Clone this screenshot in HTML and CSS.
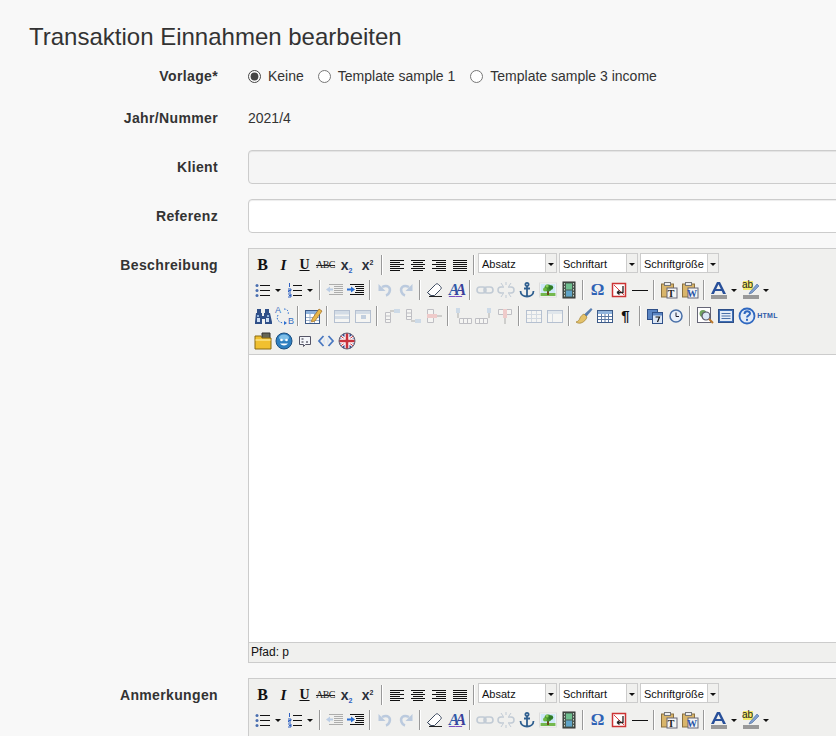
FILE: index.html
```html
<!DOCTYPE html>
<html lang="de">
<head>
    <meta charset="UTF-8">
    <meta name="viewport" content="width=device-width, initial-scale=1.0">
    <title>Transaktion Einnahmen bearbeiten</title>
    <link rel="stylesheet" href="styles.css">
</head>
<body>
    <!-- toolbar icons -->
    <svg class="defs" xmlns="http://www.w3.org/2000/svg">
        <symbol id="i-left" viewBox="0 0 20 20"><path d="M3 5.500h14M3 7.500h10M3 9.500h14M3 11.500h10M3 13.500h14M3 15.500h10" stroke="#111" fill="none"/></symbol>
        <symbol id="i-center" viewBox="0 0 20 20"><path d="M3 5.500h14M5 7.500h10M3 9.500h14M5 11.500h10M3 13.500h14M5 15.500h10" stroke="#111" fill="none"/></symbol>
        <symbol id="i-right" viewBox="0 0 20 20"><path d="M3 5.500h14M7 7.500h10M3 9.500h14M7 11.500h10M3 13.500h14M7 15.500h10" stroke="#111" fill="none"/></symbol>
        <symbol id="i-justify" viewBox="0 0 20 20"><path d="M3 5.500h14M3 7.500h14M3 9.500h14M3 11.500h14M3 13.500h14M3 15.500h14" stroke="#111" fill="none"/></symbol>
        <symbol id="i-bullist" viewBox="0 0 20 20"><path d="M7 5.500h10M7 10.500h10M7 15.500h10" stroke="#111" fill="none"/><circle cx="4" cy="5.500" r="1.500" fill="#4a6fb0"/><circle cx="4" cy="10.500" r="1.500" fill="#4a6fb0"/><circle cx="4" cy="15.500" r="1.500" fill="#4a6fb0"/></symbol>
        <symbol id="i-numlist" viewBox="0 0 20 20"><path d="M8 5.500h9M8 10.500h9M8 15.500h9" stroke="#111" fill="none"/><path d="M4.500 3v4M3 9h3v1.500H3.500V12H6M3 14h3v3H3M4 15.500h2" stroke="#2d5fc0" fill="none"/></symbol>
        <symbol id="i-outdent" viewBox="0 0 20 20"><path d="M4 4.500h14M9 6.500h9M9 8.500h9M9 10.500h9M9 12.500h9M4 14.500h14" stroke="#333" fill="none"/><path d="M1 9.500l4-3v2h3v2H5v2z" fill="#5b8fd6"/></symbol>
        <symbol id="i-indent" viewBox="0 0 20 20"><path d="M4 4.500h14M9 6.500h9M10 8.500h8M10 10.500h8M9 12.500h9M4 14.500h14" stroke="#111" fill="none"/><path d="M9 9.500l-4-3v2H1v2h4v2z" fill="#2d6fd0"/></symbol>
        <symbol id="i-undo" viewBox="0 0 20 20"><path d="M7 7c6-3 9 1 7.500 5-.7 2-2 3-3.500 3.500" stroke="#5a86c2" stroke-width="2.500" fill="none"/><path d="M3.500 4v7h7z" fill="#5a86c2"/></symbol>
        <symbol id="i-redo" viewBox="0 0 20 20"><path d="M13 7C7 4 4 8 5.500 12c.7 2 2 3 3.500 3.500" stroke="#5a86c2" stroke-width="2.500" fill="none"/><path d="M16.500 4v7h-7z" fill="#5a86c2"/></symbol>
        <symbol id="i-eraser" viewBox="0 0 20 20"><path d="M2.500 12.500l8-8c1-1 2-1 3 0l2 2c1 1 1 2 0 3l-6 6H6z" fill="#fff" stroke="#3c4a60"/><path d="M2.500 12.500l3 3" stroke="#3c4a60"/><path d="M4 16.500h13" stroke="#222"/></symbol>
        <symbol id="i-link" viewBox="0 0 20 20"><g fill="none" stroke="#6d87a8" stroke-width="1.600"><rect x="2" y="7" width="9" height="6" rx="3"/><rect x="9" y="7" width="9" height="6" rx="3"/></g></symbol>
        <symbol id="i-unlink" viewBox="0 0 20 20"><g fill="none" stroke="#6d87a8" stroke-width="1.500"><path d="M8 7H5a3 3 0 000 6h3M12 7h3a3 3 0 010 6h-3"/><path d="M10 2v3M10 15v3M5 3l2 3M15 3l-2 3M5 17l2-3M15 17l-2-3" stroke-width="1"/></g></symbol>
        <symbol id="i-anchor" viewBox="0 0 20 20"><g fill="none" stroke="#2f5f8f" stroke-width="1.800"><circle cx="10" cy="4.500" r="1.600"/><path d="M10 6v11M7 8.500h6M3.500 11c0 3.500 3 5.500 6.500 5.500s6.500-2 6.500-5.500"/></g></symbol>
        <symbol id="i-image" viewBox="0 0 20 20"><rect x="1.500" y="3" width="17" height="14" fill="#fff" stroke="#ddd"/><rect x="2.500" y="4" width="15" height="9" fill="#cfe8f8"/><rect x="2.500" y="13" width="15" height="3" fill="#74b84e"/><rect x="9" y="10" width="2" height="5" fill="#6b4a1e"/><circle cx="10" cy="8" r="3.500" fill="#3f8f2f"/><circle cx="7" cy="9.500" r="2" fill="#6cb83f"/><circle cx="13" cy="7.500" r="2.200" fill="#2d7a25"/><circle cx="9" cy="6" r="1.500" fill="#8ccc5a"/></symbol>
        <symbol id="i-media" viewBox="0 0 20 20"><rect x="4" y="2" width="12" height="16" fill="#4a5a50" stroke="#333"/><rect x="7" y="3.500" width="6" height="6" fill="#6fbf8f"/><rect x="7" y="10.500" width="6" height="6" fill="#5fa3c7"/><path d="M5.500 3v14M14.500 3v14" stroke="#c8d0c8" stroke-dasharray="1.500 1.500"/></symbol>
        <symbol id="i-nbsp" viewBox="0 0 20 20"><rect x="3.500" y="3.500" width="13" height="13" fill="#fff" stroke="#c33" stroke-width="1.500"/><path d="M5 5l10 10" stroke="#d44"/><path d="M14 6v6.500H8M8 12.500l2.500-2M8 12.500l2.500 2" stroke="#222" stroke-width="1.300" fill="none"/></symbol>
        <symbol id="i-hr" viewBox="0 0 20 20"><path d="M2 10.500h16" stroke="#111"/></symbol>
        <symbol id="i-clip" viewBox="0 0 20 20"><rect x="2.500" y="4" width="12" height="13" fill="#d9b56a" stroke="#8a7040"/><rect x="5.500" y="2.500" width="6" height="3" fill="#eee" stroke="#777"/><rect x="8" y="8" width="10" height="10" fill="#f4f4f4" stroke="#667"/></symbol>
        <symbol id="i-forecolor" viewBox="0 0 20 20"><path d="M2 14L8 2h3l6 12h-3l-1.200-3H6.200L5 14zM7.200 9h4.600L9.500 4.200z" fill="#28509a"/><rect x="2" y="15" width="16" height="4" fill="#999"/></symbol>
        <symbol id="i-backcolor" viewBox="0 0 20 20"><rect x="2" y="1" width="10" height="9" fill="#f4e96a"/><path d="M9 12l7-8 2 2-7 7-3 1z" fill="#7f9fcf" stroke="#4a6a9a" stroke-width=".6"/><rect x="2" y="15" width="16" height="4" fill="#999"/></symbol>
        <symbol id="i-search" viewBox="0 0 20 20"><g fill="#2f4f88"><path d="M4 3h4v4H4zM12 3h4v4h-4z"/><path d="M3 7h6v3h2V7h6l2 9v2h-7v-5H9v5H2v-2z"/></g><path d="M4 9h2v2H4zM14 9h2v2h-2z" fill="#8fb3dc"/><path d="M4 12h3v4H4zM13 12h3v4h-3z" fill="#cfe0f5"/></symbol>
        <symbol id="i-replace" viewBox="0 0 20 20"><path d="M4 9c-2 4 0 7 5 8M10 3c4 0 5 3 4 6" stroke="#2d6fd0" stroke-dasharray="1.500 1.500" fill="none"/><path d="M10 15l3 2-3 2z" fill="#2d6fd0"/></symbol>
        <symbol id="i-tableedit" viewBox="0 0 20 20"><rect x="2.500" y="4.500" width="14" height="13" fill="#fff" stroke="#3c5a88"/><rect x="3" y="5" width="13" height="3" fill="#8fb3dc"/><path d="M3 11.500h13M3 14.500h13M7 8v9M11.500 8v9" stroke="#9fb3cc"/><path d="M9 13l7-10 3 2-7 10-3.500 1z" fill="#e8b84a" stroke="#a06a20" stroke-width=".7"/></symbol>
        <symbol id="i-rowprop" viewBox="0 0 20 20"><rect x="2.500" y="4.500" width="15" height="12" fill="#fff" stroke="#4a6a9a"/><rect x="3" y="5" width="14" height="3.500" fill="#9fb8d8"/><rect x="3" y="10" width="14" height="3" fill="#9fb8d8"/></symbol>
        <symbol id="i-cellprop" viewBox="0 0 20 20"><rect x="2.500" y="4.500" width="15" height="12" fill="#fff" stroke="#4a6a9a"/><rect x="3" y="5" width="14" height="3" fill="#9fb8d8"/><rect x="8" y="9" width="5" height="4" fill="#6f94c4"/></symbol>
        <symbol id="i-rowbefore" viewBox="0 0 20 20"><path d="M3.500 6.500h5v10h-5zM3.500 10h5M3.500 13.500h5" fill="#fff" stroke="#667"/><rect x="12" y="3" width="6" height="4" fill="#8fb3dc"/><path d="M8 5h4" stroke="#333"/></symbol>
        <symbol id="i-rowafter" viewBox="0 0 20 20"><path d="M3.500 3.500h5v10h-5zM3.500 7h5M3.500 10.500h5" fill="#fff" stroke="#667"/><rect x="12" y="13" width="6" height="4" fill="#8fb3dc"/><path d="M8 15h4" stroke="#333"/></symbol>
        <symbol id="i-rowdel" viewBox="0 0 20 20"><path d="M3.500 3.500h6v13h-6z" fill="#fff" stroke="#667"/><rect x="3" y="8" width="10" height="4" fill="#e88"/><path d="M13 10h5" stroke="#333"/></symbol>
        <symbol id="i-colbefore" viewBox="0 0 20 20"><rect x="3" y="2" width="4" height="5" fill="#8fb3dc"/><path d="M5 7v5" stroke="#333"/><path d="M6.500 12.500h12v5h-12zM10.500 12.500v5M14.500 12.500v5" fill="#fff" stroke="#667"/></symbol>
        <symbol id="i-colafter" viewBox="0 0 20 20"><rect x="13" y="2" width="4" height="5" fill="#8fb3dc"/><path d="M15 7v5" stroke="#333"/><path d="M1.500 12.500h12v5h-12zM5.500 12.500v5M9.500 12.500v5" fill="#fff" stroke="#667"/></symbol>
        <symbol id="i-coldel" viewBox="0 0 20 20"><path d="M3.500 3.500h13v5h-13z" fill="#fff" stroke="#667"/><rect x="8" y="3" width="4" height="9" fill="#e88"/><path d="M10 12v6" stroke="#333"/></symbol>
        <symbol id="i-split" viewBox="0 0 20 20"><rect x="2.500" y="4.500" width="15" height="12" fill="#fff" stroke="#4a6a9a"/><path d="M3 8.500h14M3 12.500h14M7.500 5v11M12.500 5v11" stroke="#9fb3cc"/></symbol>
        <symbol id="i-merge" viewBox="0 0 20 20"><rect x="2.500" y="4.500" width="15" height="12" fill="#fff" stroke="#4a6a9a"/><rect x="3" y="5" width="14" height="3" fill="#c4d4e8"/><path d="M7.500 8v8" stroke="#9fb3cc"/></symbol>
        <symbol id="i-brush" viewBox="0 0 20 20"><path d="M17 2l1.500 1.500-6 7-2.500-2z" fill="#5a7fb0"/><path d="M10 8l3 3c-1 3-3 5-6 6-2 .5-4 0-5-1 3-1 3-2 4-4s2-3 4-4z" fill="#e4c26a" stroke="#a08030" stroke-width=".7"/></symbol>
        <symbol id="i-table" viewBox="0 0 20 20"><rect x="2.500" y="4.500" width="15" height="12" fill="#fff" stroke="#3c5a88"/><rect x="3" y="5" width="14" height="3" fill="#8fb3dc"/><path d="M3 10.500h14M3 13.500h14M6.500 8v8M10 8v8M13.500 8v8" stroke="#5c7aa5"/></symbol>
        <symbol id="i-date" viewBox="0 0 20 20"><rect x="2.500" y="3.500" width="10" height="10" fill="#5b86c4" stroke="#2f5088"/><rect x="7.500" y="6.500" width="10" height="11" fill="#dbe6f5" stroke="#2f5088"/><rect x="8" y="7" width="9" height="2.500" fill="#5b86c4"/><path d="M10.500 11h4l-2 5" stroke="#111" stroke-width="1.200" fill="none"/></symbol>
        <symbol id="i-time" viewBox="0 0 20 20"><circle cx="10" cy="10" r="6" fill="#e9f0fa" stroke="#4a70a8" stroke-width="1.500"/><path d="M10 6.500V10.500h3" stroke="#223" fill="none"/></symbol>
        <symbol id="i-preview" viewBox="0 0 20 20"><rect x="2.500" y="1.500" width="13" height="15" fill="#fff" stroke="#667"/><circle cx="8" cy="7.500" r="3.500" fill="#6fa35f"/><circle cx="11" cy="10" r="4" fill="#dbe8f5" stroke="#556" stroke-width="1.200"/><path d="M14 13l4 4" stroke="#b9772a" stroke-width="2"/></symbol>
        <symbol id="i-full" viewBox="0 0 20 20"><rect x="2.500" y="3.500" width="15" height="13" fill="#3f6fb5" stroke="#2f5088"/><rect x="4" y="5" width="12" height="10" fill="#e4ecf7"/><path d="M5.500 7.500h9M5.500 10h9M5.500 12.500h9" stroke="#4a70a8"/></symbol>
        <symbol id="i-help" viewBox="0 0 20 20"><circle cx="10" cy="10" r="7.500" fill="#e4ecf7" stroke="#2f68c0" stroke-width="1.800"/><path d="M7.500 8c0-3.500 5.500-3.500 5.500-.5 0 2-3 2-3 4" stroke="#2f68c0" stroke-width="2" fill="none"/><rect x="9" y="12.800" width="2" height="2" fill="#2f68c0"/></symbol>
        <symbol id="i-folder" viewBox="0 0 20 20"><path d="M9 2h8v8H9z" fill="#665" stroke="#333"/><path d="M2 5h6l1 2h9v11H2z" fill="#f0c030" stroke="#8a6a10"/><path d="M2.500 9h15" stroke="#fbe58a" stroke-width="1.500"/></symbol>
        <symbol id="i-smiley" viewBox="0 0 20 20"><circle cx="10" cy="10" r="8" fill="#2f7fc0" stroke="#1c4f80"/><ellipse cx="10" cy="6.500" rx="5" ry="3" fill="#7fbfe8"/><circle cx="7.500" cy="9" r="1.300" fill="#fff"/><circle cx="12.500" cy="9" r="1.300" fill="#fff"/><path d="M6 12.500c2 2.500 6 2.500 8 0z" fill="#fff"/></symbol>
        <symbol id="i-bubble" viewBox="0 0 20 20"><path d="M4.500 5.500h11v8h-5l-2 2v-2h-4z" fill="#f4f6fa" stroke="#556"/><path d="M6.500 8h2M6.500 11h2M11 11h2" stroke="#223"/></symbol>
        <symbol id="i-code" viewBox="0 0 20 20"><path d="M7.500 5L3 10l4.500 5M12.500 5L17 10l-4.500 5" stroke="#4a78c0" stroke-width="1.800" fill="none"/><path d="M9 6.500l-2.500 3.500L9 13.500zM11 6.500l2.500 3.500-2.500 3.500z" fill="#dbe6f5"/></symbol>
        <symbol id="i-flag" viewBox="0 0 20 20"><clipPath id="flag-clip"><circle cx="10" cy="10" r="8"/></clipPath><g clip-path="url(#flag-clip)"><rect width="20" height="20" fill="#33478f"/><path d="M0 2l20 16M20 2L0 18" stroke="#fff" stroke-width="3"/><path d="M0 2l20 16M20 2L0 18" stroke="#c8323c"/><path d="M10 0v20M0 10h20" stroke="#fff" stroke-width="5"/><path d="M10 0v20M0 10h20" stroke="#c8323c" stroke-width="2.600"/></g><circle cx="10" cy="10" r="8" fill="none" stroke="#667"/></symbol>
    </svg>

    <h1 class="page-title">Transaktion Einnahmen bearbeiten</h1>

    <form class="form">
        <div class="form-group form-group-vorlage">
            <label class="form-label">Vorlage*</label>
            <div class="radios">
                <label class="radio-item"><input type="radio" name="vorlage" checked> Keine</label>
                <label class="radio-item"><input type="radio" name="vorlage"> Template sample 1</label>
                <label class="radio-item"><input type="radio" name="vorlage"> Template sample 3 income</label>
            </div>
        </div>

        <div class="form-group form-group-jahr">
            <label class="form-label">Jahr/Nummer</label>
            <div class="static-value">2021/4</div>
        </div>

        <div class="form-group">
            <label class="form-label">Klient</label>
            <input type="text" class="form-control" disabled>
        </div>

        <div class="form-group">
            <label class="form-label">Referenz</label>
            <input type="text" class="form-control">
        </div>

        <div class="form-group">
            <label class="form-label">Beschreibung</label>
            <div class="editor">
                <div class="toolbar">
                    <div class="tool-row">
                        <span class="btn t-bold">B</span>
                        <span class="btn t-italic">I</span>
                        <span class="btn t-under">U</span>
                        <span class="btn t-strike">ABC</span>
                        <span class="btn t-x"><span>x<sub>2</sub></span></span>
                        <span class="btn t-x"><span>x<sup>2</sup></span></span>
                        <span class="sep"></span>
                        <span class="btn"><svg class="ico"><use href="#i-left"/></svg></span>
                        <span class="btn"><svg class="ico"><use href="#i-center"/></svg></span>
                        <span class="btn"><svg class="ico"><use href="#i-right"/></svg></span>
                        <span class="btn"><svg class="ico"><use href="#i-justify"/></svg></span>
                        <span class="sep"></span>
                        <span class="mce-select"><span class="mce-select-text">Absatz</span><span class="mce-select-arrow"></span></span>
                        <span class="mce-select"><span class="mce-select-text">Schriftart</span><span class="mce-select-arrow"></span></span>
                        <span class="mce-select"><span class="mce-select-text">Schriftgröße</span><span class="mce-select-arrow"></span></span>
                    </div>
                    <div class="tool-row">
                        <span class="btn"><svg class="ico"><use href="#i-bullist"/></svg></span><span class="drop"></span>
                        <span class="btn"><svg class="ico"><use href="#i-numlist"/></svg></span><span class="drop"></span>
                        <span class="sep"></span>
                        <span class="btn off"><svg class="ico"><use href="#i-outdent"/></svg></span>
                        <span class="btn"><svg class="ico"><use href="#i-indent"/></svg></span>
                        <span class="sep"></span>
                        <span class="btn off"><svg class="ico"><use href="#i-undo"/></svg></span>
                        <span class="btn off"><svg class="ico"><use href="#i-redo"/></svg></span>
                        <span class="sep"></span>
                        <span class="btn"><svg class="ico"><use href="#i-eraser"/></svg></span>
                        <span class="btn t-styles">A<i>A</i></span>
                        <span class="sep"></span>
                        <span class="btn off"><svg class="ico"><use href="#i-link"/></svg></span>
                        <span class="btn off"><svg class="ico"><use href="#i-unlink"/></svg></span>
                        <span class="btn"><svg class="ico"><use href="#i-anchor"/></svg></span>
                        <span class="btn"><svg class="ico"><use href="#i-image"/></svg></span>
                        <span class="btn"><svg class="ico"><use href="#i-media"/></svg></span>
                        <span class="sep"></span>
                        <span class="btn t-omega">Ω</span>
                        <span class="btn"><svg class="ico"><use href="#i-nbsp"/></svg></span>
                        <span class="btn"><svg class="ico"><use href="#i-hr"/></svg></span>
                        <span class="sep"></span>
                        <span class="btn"><svg class="ico"><use href="#i-clip"/></svg><span class="clip-t">T</span></span>
                        <span class="btn"><svg class="ico"><use href="#i-clip"/></svg><span class="clip-t clip-w">W</span></span>
                        <span class="sep"></span>
                        <span class="btn"><svg class="ico"><use href="#i-forecolor"/></svg></span><span class="drop"></span>
                        <span class="btn"><svg class="ico"><use href="#i-backcolor"/></svg><span class="clip-ab">ab</span></span><span class="drop"></span>
                    </div>
                    <div class="tool-row">
                        <span class="btn"><svg class="ico"><use href="#i-search"/></svg></span>
                        <span class="btn"><svg class="ico"><use href="#i-replace"/></svg><span class="rep-a">A</span><span class="rep-b">B</span></span>
                        <span class="sep"></span>
                        <span class="btn"><svg class="ico"><use href="#i-tableedit"/></svg></span>
                        <span class="sep"></span>
                        <span class="btn off"><svg class="ico"><use href="#i-rowprop"/></svg></span>
                        <span class="btn off"><svg class="ico"><use href="#i-cellprop"/></svg></span>
                        <span class="sep"></span>
                        <span class="btn off"><svg class="ico"><use href="#i-rowbefore"/></svg></span>
                        <span class="btn off"><svg class="ico"><use href="#i-rowafter"/></svg></span>
                        <span class="btn off"><svg class="ico"><use href="#i-rowdel"/></svg></span>
                        <span class="sep"></span>
                        <span class="btn off"><svg class="ico"><use href="#i-colbefore"/></svg></span>
                        <span class="btn off"><svg class="ico"><use href="#i-colafter"/></svg></span>
                        <span class="btn off"><svg class="ico"><use href="#i-coldel"/></svg></span>
                        <span class="sep"></span>
                        <span class="btn off"><svg class="ico"><use href="#i-split"/></svg></span>
                        <span class="btn off"><svg class="ico"><use href="#i-merge"/></svg></span>
                        <span class="sep"></span>
                        <span class="btn"><svg class="ico"><use href="#i-brush"/></svg></span>
                        <span class="btn"><svg class="ico"><use href="#i-table"/></svg></span>
                        <span class="btn t-pilcrow">¶</span>
                        <span class="sep"></span>
                        <span class="btn"><svg class="ico"><use href="#i-date"/></svg></span>
                        <span class="btn"><svg class="ico"><use href="#i-time"/></svg></span>
                        <span class="sep"></span>
                        <span class="btn"><svg class="ico"><use href="#i-preview"/></svg></span>
                        <span class="btn"><svg class="ico"><use href="#i-full"/></svg></span>
                        <span class="btn"><svg class="ico"><use href="#i-help"/></svg></span>
                        <span class="btn t-html">HTML</span>
                    </div>
                    <div class="tool-row">
                        <span class="btn"><svg class="ico"><use href="#i-folder"/></svg></span>
                        <span class="btn"><svg class="ico"><use href="#i-smiley"/></svg></span>
                        <span class="btn"><svg class="ico"><use href="#i-bubble"/></svg></span>
                        <span class="btn"><svg class="ico"><use href="#i-code"/></svg></span>
                        <span class="btn"><svg class="ico"><use href="#i-flag"/></svg></span>
                    </div>
                </div>
                <div class="editor-body"></div>
                <div class="statusbar">Pfad: p</div>
            </div>
        </div>

        <div class="form-group">
            <label class="form-label">Anmerkungen</label>
            <div class="editor">
                <div class="toolbar">
                    <div class="tool-row">
                        <span class="btn t-bold">B</span>
                        <span class="btn t-italic">I</span>
                        <span class="btn t-under">U</span>
                        <span class="btn t-strike">ABC</span>
                        <span class="btn t-x"><span>x<sub>2</sub></span></span>
                        <span class="btn t-x"><span>x<sup>2</sup></span></span>
                        <span class="sep"></span>
                        <span class="btn"><svg class="ico"><use href="#i-left"/></svg></span>
                        <span class="btn"><svg class="ico"><use href="#i-center"/></svg></span>
                        <span class="btn"><svg class="ico"><use href="#i-right"/></svg></span>
                        <span class="btn"><svg class="ico"><use href="#i-justify"/></svg></span>
                        <span class="sep"></span>
                        <span class="mce-select"><span class="mce-select-text">Absatz</span><span class="mce-select-arrow"></span></span>
                        <span class="mce-select"><span class="mce-select-text">Schriftart</span><span class="mce-select-arrow"></span></span>
                        <span class="mce-select"><span class="mce-select-text">Schriftgröße</span><span class="mce-select-arrow"></span></span>
                    </div>
                    <div class="tool-row">
                        <span class="btn"><svg class="ico"><use href="#i-bullist"/></svg></span><span class="drop"></span>
                        <span class="btn"><svg class="ico"><use href="#i-numlist"/></svg></span><span class="drop"></span>
                        <span class="sep"></span>
                        <span class="btn off"><svg class="ico"><use href="#i-outdent"/></svg></span>
                        <span class="btn"><svg class="ico"><use href="#i-indent"/></svg></span>
                        <span class="sep"></span>
                        <span class="btn off"><svg class="ico"><use href="#i-undo"/></svg></span>
                        <span class="btn off"><svg class="ico"><use href="#i-redo"/></svg></span>
                        <span class="sep"></span>
                        <span class="btn"><svg class="ico"><use href="#i-eraser"/></svg></span>
                        <span class="btn t-styles">A<i>A</i></span>
                        <span class="sep"></span>
                        <span class="btn off"><svg class="ico"><use href="#i-link"/></svg></span>
                        <span class="btn off"><svg class="ico"><use href="#i-unlink"/></svg></span>
                        <span class="btn"><svg class="ico"><use href="#i-anchor"/></svg></span>
                        <span class="btn"><svg class="ico"><use href="#i-image"/></svg></span>
                        <span class="btn"><svg class="ico"><use href="#i-media"/></svg></span>
                        <span class="sep"></span>
                        <span class="btn t-omega">Ω</span>
                        <span class="btn"><svg class="ico"><use href="#i-nbsp"/></svg></span>
                        <span class="btn"><svg class="ico"><use href="#i-hr"/></svg></span>
                        <span class="sep"></span>
                        <span class="btn"><svg class="ico"><use href="#i-clip"/></svg><span class="clip-t">T</span></span>
                        <span class="btn"><svg class="ico"><use href="#i-clip"/></svg><span class="clip-t clip-w">W</span></span>
                        <span class="sep"></span>
                        <span class="btn"><svg class="ico"><use href="#i-forecolor"/></svg></span><span class="drop"></span>
                        <span class="btn"><svg class="ico"><use href="#i-backcolor"/></svg><span class="clip-ab">ab</span></span><span class="drop"></span>
                    </div>
                </div>
            </div>
        </div>
    </form>
</body>
</html>
```

FILE: styles.css
```css
html {
    overflow: hidden;
    height: 100%;
}

body {
    margin: 0;
    width: 836px;
    height: 736px;
    overflow: hidden;
    background-color: #f8f8f8;
    color: #333;
    font-family: "Liberation Sans", Arial, sans-serif;
    font-size: 14px;
    line-height: 20px;
}

.defs {
    display: block;
    width: 0;
    height: 0;
}

.page-title {
    margin: 0;
    padding: 20px 0 0 29px;
    height: 33px;
    font-size: 24px;
    font-weight: normal;
    line-height: 33px;
}

.form {
    width: 950px;
}

.form-group {
    display: grid;
    grid-template-columns: 218px 700px;
    column-gap: 30px;
    margin-bottom: 15px;
}

.form-label {
    padding-top: 7px;
    font-weight: bold;
    letter-spacing: 0.36px;
    text-align: right;
}

.form-group-vorlage {
    margin-top: 6px;
    margin-bottom: 0;
    height: 42px;
}

.form-group-jahr {
    margin-bottom: 0;
    height: 49px;
}

.radios {
    display: flex;
    gap: 15px;
    padding-top: 7px;
}

.radio-item {
    display: flex;
    align-items: center;
    gap: 7px;
    height: 20px;
}

.radio-item:first-child {
    margin-right: -1px;
}

.radio-item input {
    width: 13px;
    height: 13px;
    margin: 0;
    accent-color: #444;
}

.static-value {
    padding-top: 7px;
}

.form-control {
    box-sizing: border-box;
    width: 700px;
    height: 34px;
    padding: 6px 12px;
    background-color: #fff;
    border: 1px solid #ccc;
    border-radius: 4px;
    box-shadow: inset 0 1px 1px rgba(0, 0, 0, 0.075);
}

.form-control:disabled {
    background-color: #f5f5f5;
}

/* tinymce style editor */
.editor {
    width: 700px;
    border: 1px solid #ccc;
    background-color: #f0f0ee;
    font-size: 11px;
}

.toolbar {
    padding: 3px 0 0 3px;
    height: 102px;
}

.tool-row {
    display: flex;
    align-items: center;
    height: 25.5px;
    color: #111;
}

.btn {
    position: relative;
    display: flex;
    flex: none;
    align-items: center;
    justify-content: center;
    width: 21px;
    height: 20px;
    line-height: 20px;
}

.ico {
    width: 20px;
    height: 20px;
}

.off {
    opacity: 0.35;
}

.sep {
    flex: none;
    width: 1px;
    height: 20px;
    margin: 0 3px;
    background-color: #999;
    border-right: 1px solid #fff;
}

.drop {
    position: relative;
    flex: none;
    width: 11px;
    height: 20px;
}

.drop::after,
.mce-select-arrow::after {
    content: "";
    position: absolute;
    left: 2px;
    top: 9px;
    border-style: solid;
    border-width: 3px 3px 0;
    border-color: #111 transparent transparent;
}

.t-bold {
    font-family: "Liberation Serif", serif;
    font-size: 16px;
    font-weight: bold;
}

.t-italic {
    font-family: "Liberation Serif", serif;
    font-size: 15px;
    font-style: italic;
    font-weight: bold;
}

.t-under {
    font-family: "Liberation Serif", serif;
    font-size: 14px;
    font-weight: bold;
    text-decoration: underline;
}

.t-strike {
    font-family: "Liberation Serif", serif;
    font-size: 10px;
    letter-spacing: -0.5px;
    text-decoration: line-through;
    color: #222;
}

.t-x {
    font-size: 14px;
    font-weight: bold;
    color: #2a2f3a;
}

.t-x sub,
.t-x sup {
    font-size: 7px;
    line-height: 0;
}

.t-x sup {
    vertical-align: 5px;
}

.t-x sub {
    vertical-align: -3px;
    color: #2d5fc0;
}

.t-styles {
    font-family: "Liberation Serif", serif;
    font-size: 16px;
    font-style: italic;
    font-weight: bold;
    letter-spacing: -4px;
    color: #2f5aa8;
    text-decoration: underline;
    text-decoration-color: #7a4fc0;
}

.t-styles i {
    color: #3a3f9a;
}

.t-omega {
    font-family: "Liberation Serif", serif;
    font-size: 17px;
    font-weight: bold;
    color: #2f62b5;
}

.t-pilcrow {
    font-size: 15px;
    font-weight: bold;
    color: #111;
}

.t-html {
    font-size: 7px;
    font-weight: bold;
    letter-spacing: 0.3px;
    color: #2f5aa8;
}

.clip-t {
    position: absolute;
    right: 3px;
    bottom: 1px;
    width: 10px;
    font-family: "Liberation Serif", serif;
    font-size: 10px;
    font-weight: bold;
    line-height: 11px;
    text-align: center;
    color: #222;
}

.clip-w {
    color: #2a55a8;
}

.clip-ab {
    position: absolute;
    left: 2px;
    top: 0;
    font-size: 10px;
    line-height: 10px;
    color: #222;
}

.rep-a,
.rep-b {
    position: absolute;
    font-size: 9px;
    line-height: 9px;
    color: #3a6fc0;
}

.rep-a {
    left: 2px;
    top: 0;
}

.rep-b {
    right: 0;
    bottom: 0;
}

.mce-select {
    display: flex;
    flex: none;
    align-self: flex-start;
    box-sizing: border-box;
    width: 79px;
    height: 20px;
    margin: 1px 2px 0 0;
    border: 1px solid #ccc;
    background-color: #fff;
    line-height: 20px;
    color: #111;
}

.mce-select-text {
    flex: 1;
    padding-left: 3px;
}

.mce-select-arrow {
    position: relative;
    width: 10px;
    background-color: #f0f0ee;
    border-left: 1px solid #ccc;
}

.editor-body {
    height: 287px;
    background-color: #fff;
    border-top: 1px solid #ccc;
}

.statusbar {
    height: 19px;
    padding-left: 2px;
    border-top: 1px solid #ccc;
    font-size: 12px;
    line-height: 19px;
    color: #111;
}
```
